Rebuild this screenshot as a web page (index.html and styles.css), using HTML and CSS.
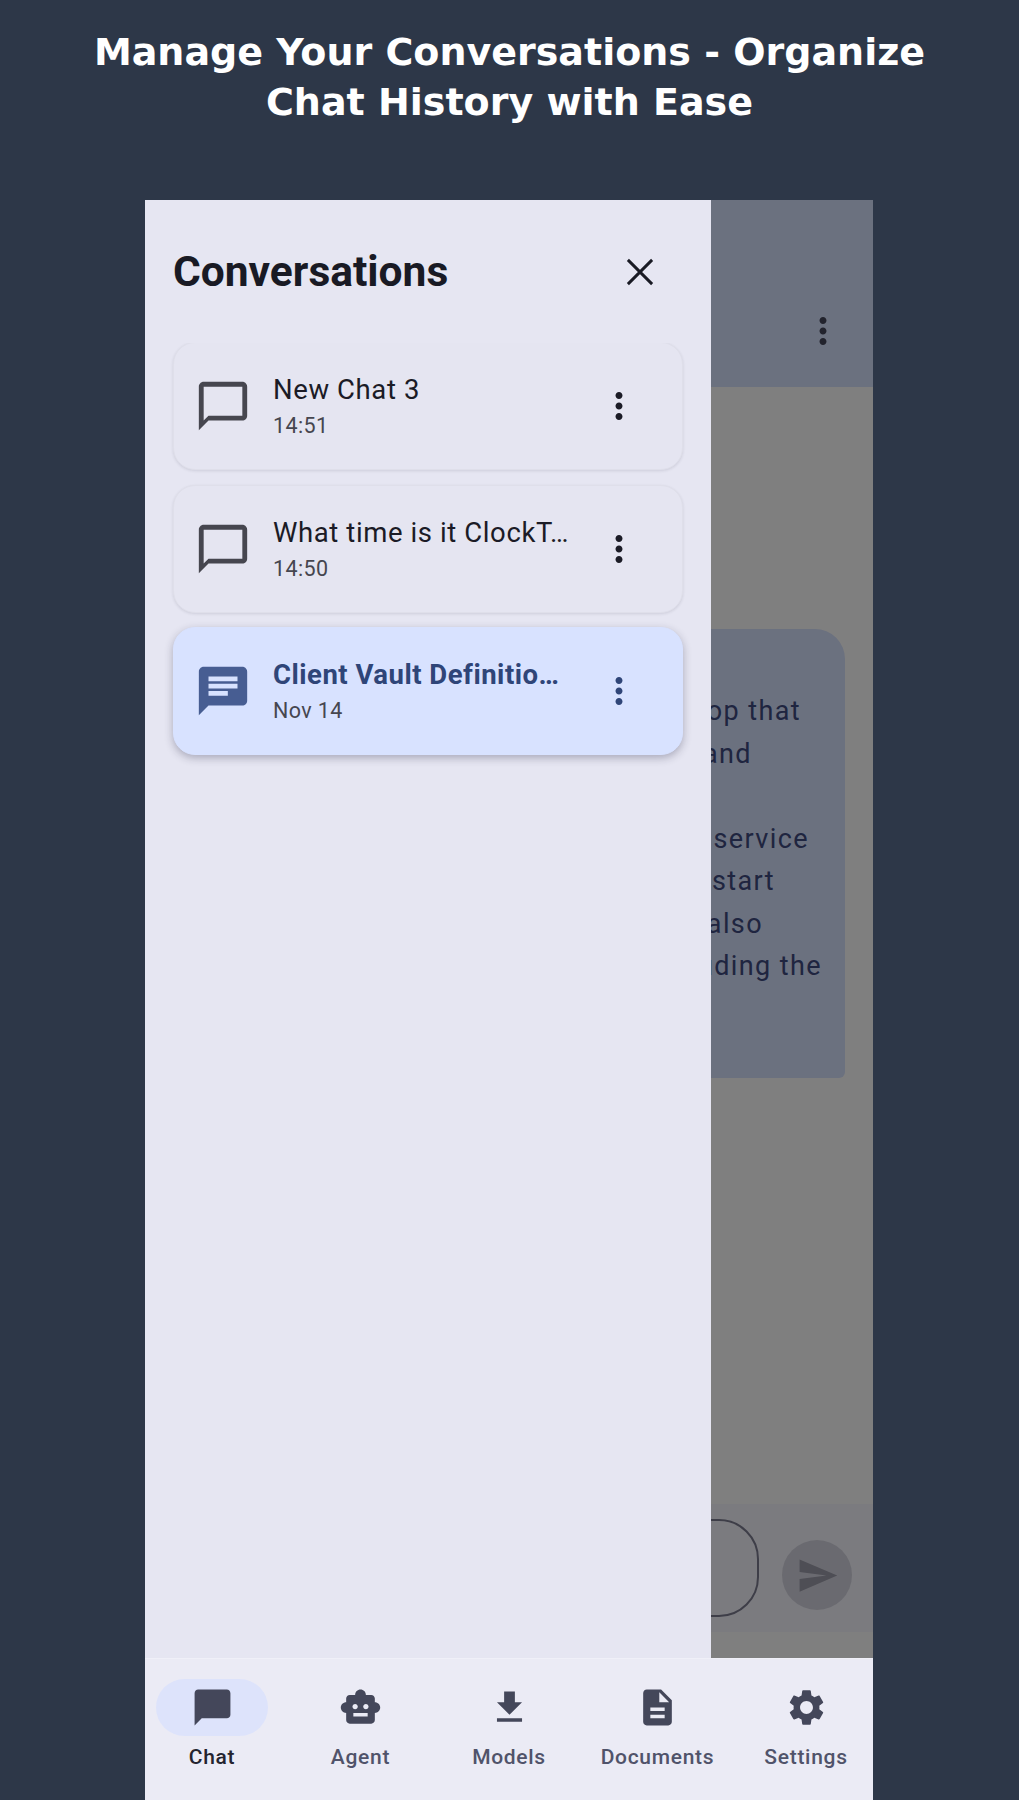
FILE: index.html
```html
<!DOCTYPE html>
<html lang="en">
<head>
<meta charset="utf-8">
<title>Manage Your Conversations</title>
<link rel="stylesheet" href="styles.css">
</head>
<body>
<h1 class="headline">Manage Your Conversations - Organize<br>Chat History with Ease</h1>
<div class="phone">
  <div class="screen">
    <header class="appbar">
      <svg class="icon appbar-more" viewBox="0 0 24 24"><path d="M12 8c1.1 0 2-.9 2-2s-.9-2-2-2-2 .9-2 2 .9 2 2 2zm0 2c-1.1 0-2 .9-2 2s.9 2 2 2 2-.9 2-2-.9-2-2-2zm0 6c-1.1 0-2 .9-2 2s.9 2 2 2 2-.9 2-2-.9-2-2-2z"/></svg>
    </header>
    <main class="messages">
      <div class="bubble">
        <p class="line l1">is a laptop that</p>
        <p class="line l2">private and</p>
        <p class="line blank">&nbsp;</p>
        <p class="line l3">local service</p>
        <p class="line l4">you can start</p>
        <p class="line l5">can also</p>
        <p class="line l6">including the</p>
      </div>
    </main>
    <div class="composer">
      <div class="field"></div>
      <div class="send">
        <svg class="icon send-icon" viewBox="0 0 24 24"><path d="M2.01 21L23 12 2.01 3 2 10l15 2-15 2z"/></svg>
      </div>
    </div>
    <div class="scrim"></div>
    <aside class="drawer">
      <div class="drawer-head">
        <h2 class="drawer-title">Conversations</h2>
        <svg class="icon close" viewBox="0 0 24 24"><path d="M5.4 5.4L18.6 18.6M18.6 5.4L5.4 18.6"/></svg>
      </div>
      <div class="list">
        <div class="card">
          <svg class="icon chat-icon" viewBox="0 0 24 24"><path d="M20 2H4c-1.1 0-2 .9-2 2v18l4-4h14c1.1 0 2-.9 2-2V4c0-1.1-.9-2-2-2zm0 14H6l-2 2V4h16v12z"/></svg>
          <div class="card-text">
            <div class="card-title">New Chat 3</div>
            <div class="card-time">14:51</div>
          </div>
          <svg class="icon card-more" viewBox="0 0 24 24"><path d="M12 8c1.1 0 2-.9 2-2s-.9-2-2-2-2 .9-2 2 .9 2 2 2zm0 2c-1.1 0-2 .9-2 2s.9 2 2 2 2-.9 2-2-.9-2-2-2zm0 6c-1.1 0-2 .9-2 2s.9 2 2 2 2-.9 2-2-.9-2-2-2z"/></svg>
        </div>
        <div class="card">
          <svg class="icon chat-icon" viewBox="0 0 24 24"><path d="M20 2H4c-1.1 0-2 .9-2 2v18l4-4h14c1.1 0 2-.9 2-2V4c0-1.1-.9-2-2-2zm0 14H6l-2 2V4h16v12z"/></svg>
          <div class="card-text">
            <div class="card-title">What time is it ClockT…</div>
            <div class="card-time">14:50</div>
          </div>
          <svg class="icon card-more" viewBox="0 0 24 24"><path d="M12 8c1.1 0 2-.9 2-2s-.9-2-2-2-2 .9-2 2 .9 2 2 2zm0 2c-1.1 0-2 .9-2 2s.9 2 2 2 2-.9 2-2-.9-2-2-2zm0 6c-1.1 0-2 .9-2 2s.9 2 2 2 2-.9 2-2-.9-2-2-2z"/></svg>
        </div>
        <div class="card selected">
          <svg class="icon chat-icon" viewBox="0 0 24 24"><path d="M20 2H4c-1.1 0-1.99.9-1.99 2L2 22l4-4h14c1.1 0 2-.9 2-2V4c0-1.1-.9-2-2-2zM6 9h12v2H6V9zm8 5H6v-2h8v2zm4-6H6V6h12v2z"/></svg>
          <div class="card-text">
            <div class="card-title">Client Vault Definitio…</div>
            <div class="card-time">Nov 14</div>
          </div>
          <svg class="icon card-more" viewBox="0 0 24 24"><path d="M12 8c1.1 0 2-.9 2-2s-.9-2-2-2-2 .9-2 2 .9 2 2 2zm0 2c-1.1 0-2 .9-2 2s.9 2 2 2 2-.9 2-2-.9-2-2-2zm0 6c-1.1 0-2 .9-2 2s.9 2 2 2 2-.9 2-2-.9-2-2-2z"/></svg>
        </div>
      </div>
    </aside>
  </div>
  <nav class="nav">
    <div class="nav-item active">
      <div class="nav-pill"><svg class="icon nav-icon" viewBox="0 0 24 24"><path d="M20 2H4c-1.1 0-1.99.9-1.99 2L2 22l4-4h14c1.1 0 2-.9 2-2V4c0-1.1-.9-2-2-2z"/></svg></div>
      <span class="nav-label">Chat</span>
    </div>
    <div class="nav-item">
      <div class="nav-pill"><svg class="icon nav-icon" viewBox="0 0 24 24"><path d="M20 9V7c0-1.1-.9-2-2-2h-3c0-1.66-1.34-3-3-3S9 3.34 9 5H6c-1.1 0-2 .9-2 2v2c-1.66 0-3 1.34-3 3s1.34 3 3 3v4c0 1.1.9 2 2 2h12c1.1 0 2-.9 2-2v-4c1.66 0 3-1.34 3-3s-1.34-3-3-3zM7.5 11.5c0-.83.67-1.5 1.5-1.5s1.5.67 1.5 1.5S9.83 13 9 13s-1.5-.67-1.5-1.5zM16 17H8v-2h8v2zm-1-4c-.83 0-1.5-.67-1.5-1.5S14.17 10 15 10s1.5.67 1.5 1.5S15.83 13 15 13z"/></svg></div>
      <span class="nav-label">Agent</span>
    </div>
    <div class="nav-item">
      <div class="nav-pill"><svg class="icon nav-icon" viewBox="0 0 24 24"><path d="M19 9h-4V3H9v6H5l7 7 7-7zM5 18v2h14v-2H5z"/></svg></div>
      <span class="nav-label">Models</span>
    </div>
    <div class="nav-item">
      <div class="nav-pill"><svg class="icon nav-icon" viewBox="0 0 24 24"><path d="M14 2H6c-1.1 0-1.99.9-1.99 2L4 20c0 1.1.89 2 1.99 2H18c1.1 0 2-.9 2-2V8l-6-6zm2 16H8v-2h8v2zm0-4H8v-2h8v2zm-3-5V3.5L18.5 9H13z"/></svg></div>
      <span class="nav-label">Documents</span>
    </div>
    <div class="nav-item">
      <div class="nav-pill"><svg class="icon nav-icon" viewBox="0 0 24 24"><path d="M19.14 12.94c.04-.3.06-.61.06-.94 0-.32-.02-.64-.07-.94l2.03-1.58c.18-.14.23-.41.12-.61l-1.92-3.32c-.12-.22-.37-.29-.59-.22l-2.39.96c-.5-.38-1.03-.7-1.62-.94l-.36-2.54c-.04-.24-.24-.41-.48-.41h-3.84c-.24 0-.43.17-.47.41l-.36 2.54c-.59.24-1.13.57-1.62.94l-2.39-.96c-.22-.08-.47 0-.59.22L2.74 8.87c-.12.21-.08.47.12.61l2.03 1.58c-.05.3-.09.63-.09.94s.02.64.07.94l-2.03 1.58c-.18.14-.23.41-.12.61l1.92 3.32c.12.22.37.29.59.22l2.39-.96c.5.38 1.03.7 1.62.94l.36 2.54c.05.24.24.41.48.41h3.84c.24 0 .44-.17.47-.41l.36-2.54c.59-.24 1.13-.56 1.62-.94l2.39.96c.22.08.47 0 .59-.22l1.92-3.32c.12-.22.07-.47-.12-.61l-2.01-1.58zM12 15.6c-1.98 0-3.6-1.62-3.6-3.6s1.62-3.6 3.6-3.6 3.6 1.62 3.6 3.6-1.62 3.6-3.6 3.6z"/></svg></div>
      <span class="nav-label">Settings</span>
    </div>
  </nav>
</div>
</body>
</html>
```

FILE: styles.css
```css
* { box-sizing: border-box; }
html, body { margin: 0; padding: 0; }
body {
  width: 1019px;
  height: 1800px;
  overflow: hidden;
  background: #2d3748;
  font-family: Roboto, "Noto Sans", sans-serif;
}
.icon { display: block; flex: none; fill: currentColor; }

.headline {
  margin: 0;
  height: 200px;
  padding: 27px 40px 0;
  font: 700 38px/50px "DejaVu Sans", sans-serif;
  color: #fff;
  text-align: center;
}

.phone {
  width: 728px;
  height: 1600px;
  margin-left: 145px;
  display: flex;
  flex-direction: column;
}
.screen {
  position: relative;
  flex: 1;
  min-height: 0;
  display: flex;
  flex-direction: column;
  background: #fff;
  overflow: hidden;
}

.appbar {
  height: 187px;
  background: #d7e2ff;
  color: #44475a;
  display: flex;
  justify-content: flex-end;
  padding: 110px 8px 0 0;
}
.appbar-more { width: 42px; height: 42px; margin-right: 21px; }

.messages { flex: 1; min-height: 0; padding-top: 242px; }
.bubble {
  margin-left: 120px;
  margin-right: 28px;
  height: 449px;
  padding-top: 61px;
  background: #d7e2ff;
  border-radius: 30px 30px 6px 30px;
  color: #3f4a80;
}
.line {
  margin: 0;
  font-size: 27px;
  line-height: 42.5px;
  letter-spacing: 1.4px;
  text-align: right;
  white-space: nowrap;
}
.l1 { padding-right: 44px; }
.l2 { padding-right: 93px; }
.l3 { padding-right: 36px; }
.l4 { padding-right: 70px; }
.l5 { padding-right: 82px; }
.l6 { padding-right: 23px; }

.composer {
  height: 128px;
  margin-bottom: 26px;
  background: #f6f6ff;
  display: flex;
  align-items: center;
  padding-left: 24px;
  padding-right: 21px;
  gap: 23px;
}
.field {
  flex: 1;
  height: 98px;
  border: 2px solid #7c7c90;
  border-radius: 40px;
}
.send {
  width: 70px;
  height: 70px;
  margin-top: 14px;
  border-radius: 50%;
  background: #d5d5e0;
  color: #9c9caa;
  display: flex;
  align-items: center;
  justify-content: center;
}
.send-icon { width: 43px; height: 43px; }

.scrim {
  position: absolute;
  inset: 0;
  background: rgba(0, 0, 0, .5);
}

.drawer {
  position: absolute;
  top: 0;
  bottom: 0;
  left: 0;
  width: 566px;
  background: #e6e6f2;
}
.drawer-head {
  height: 143px;
  padding: 0 49px 0 28px;
  display: flex;
  align-items: center;
  justify-content: space-between;
}
.drawer-title {
  margin: 0;
  font-size: 42.5px;
  font-weight: 700;
  color: #191a24;
}
.close {
  width: 44px;
  height: 44px;
  fill: none;
  stroke: #191a24;
  stroke-width: 1.6;
}

.list {
  display: flex;
  flex-direction: column;
  gap: 14.5px;
  padding: 0 28px 12px 28px;
  overflow: hidden;
}
.card {
  height: 128px;
  display: flex;
  align-items: center;
  padding-left: 20px;
  border: 1px solid #dfdfea;
  border-radius: 22px;
  background: #e5e5f1;
  box-shadow: 0 1px 3px rgba(30, 30, 60, .12);
  color: #1b1b26;
}
.card:first-child { margin-top: -1px; }
.chat-icon { width: 58px; height: 58px; color: #46464f; }
.card-text { width: 304px; margin-left: 21px; padding-top: 1px; }
.card-title {
  font-size: 27.5px;
  line-height: 34px;
  letter-spacing: .6px;
  white-space: nowrap;
}
.card-time {
  margin-top: 5px;
  font-size: 21.5px;
  line-height: 28px;
  letter-spacing: .4px;
  color: #46464f;
}
.card-more { width: 42px; height: 42px; margin-left: 21px; color: #1b1b26; }

.selected {
  background: #d8e2ff;
  border-color: #d8e2ff;
  box-shadow: 0 3px 8px rgba(30, 30, 60, .3);
}
.selected .chat-icon { color: #475d92; }
.selected .card-title { font-weight: 700; color: #2f4578; letter-spacing: .5px; }
.selected .card-more { color: #2f4578; }

.nav {
  height: 142px;
  flex: none;
  background: #ebebf5;
  border-top: 1px solid #f0f0f8;
  display: flex;
  justify-content: space-between;
}
.nav-item {
  width: 134px;
  padding-top: 20px;
  display: flex;
  flex-direction: column;
  align-items: center;
  color: #44475a;
}
.nav-pill {
  width: 112px;
  height: 57px;
  border-radius: 29px;
  display: flex;
  align-items: center;
  justify-content: center;
}
.active .nav-pill { background: #dde3fb; }
.nav-icon { width: 43px; height: 43px; }
.nav-label {
  margin-top: 7px;
  font-size: 21px;
  font-weight: 500;
  line-height: 28px;
  letter-spacing: .7px;
  white-space: nowrap;
  color: #50536a;
}
.active .nav-label { color: #24242f; }
```
